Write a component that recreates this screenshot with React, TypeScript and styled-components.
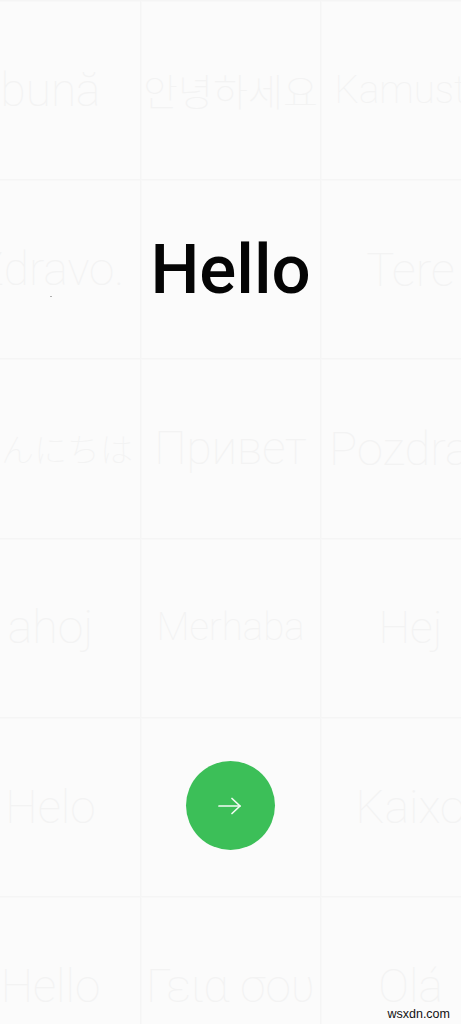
import React from "react";
import styled, { createGlobalStyle } from "styled-components";

const Global = createGlobalStyle`
  html, body { margin: 0; padding: 0; background: #fbfbfb; }
  body { width: 461px; height: 1024px; overflow: hidden; font-family: Roboto, "Noto Sans CJK JP", sans-serif; }
`;

const Screen = styled.main`
  position: relative;
  width: 461px;
  height: 1024px;
  overflow: hidden;
  background: #fbfbfb;
`;

const Grid = styled.div`
  width: 540px;
  margin-left: -39px;
  display: grid;
  grid-template-columns: repeat(3, 180px);
  grid-auto-rows: 179.2px;
`;

const Cell = styled.div`
  position: relative;
  display: flex;
  align-items: center;
  justify-content: center;
  box-sizing: border-box;
  border-top: 1px solid #f5f5f5;
  border-right: 1px solid #f5f5f5;
  box-shadow: 1px 0 0 #f8f8f8, inset 0 1px 0 #f8f8f8;
`;

const Greeting = styled.span<{ $size: number; $cjk?: boolean }>`
  font-family: ${(p) => (p.$cjk ? '"Noto Sans CJK KR", "Noto Sans CJK JP", sans-serif' : 'Roboto, sans-serif')};
  font-size: ${(p) => p.$size}px;
  font-weight: 100;
  color: #f3f3f3;
  white-space: nowrap;
  line-height: 1;
`;

const Title = styled.h1`
  margin: 0;
  font-family: Roboto, sans-serif;
  font-size: 69px;
  font-weight: 500;
  color: #050505;
  line-height: 1;
`;

const NextButton = styled.button`
  width: 89px;
  height: 89px;
  margin-bottom: 2px;
  padding: 0 3px 0 0;
  border: none;
  border-radius: 50%;
  background: #3cbf58;
  display: flex;
  align-items: center;
  justify-content: center;
`;

const Speck = styled.i`
  position: absolute;
  left: 89px;
  top: 116px;
  width: 2px;
  height: 1px;
  background: #b0b0b0;
`;

const Watermark = styled.span`
  position: absolute;
  right: 11px;
  bottom: 3px;
  font-family: "Liberation Sans", sans-serif;
  font-size: 12.5px;
  color: #111;
`;

const greetings: { text: string; size: number; cjk?: boolean }[] = [
  { text: "bună", size: 46 },
  { text: "안녕하세요", size: 38, cjk: true },
  { text: "Kamusta", size: 38.5 },
  { text: "Zdravo.", size: 46 },
  { text: "", size: 0 },
  { text: "Tere", size: 47 },
  { text: "こんにちは", size: 33, cjk: true },
  { text: "Привет", size: 46 },
  { text: "Pozdrav", size: 47 },
  { text: "ahoj", size: 46.5 },
  { text: "Merhaba", size: 38.5 },
  { text: "Hej", size: 45 },
  { text: "Helo", size: 46 },
  { text: "", size: 0 },
  { text: "Kaixo", size: 46 },
  { text: "Hello", size: 46 },
  { text: "Γεια σου", size: 46 },
  { text: "Olá", size: 46 },
];

export default function App() {
  return (
    <Screen>
      <Global />
      <Grid>
        {greetings.map((g, i) => (
          <Cell key={i}>
            {i === 4 && <Title>Hello</Title>}
            {i === 3 && <Speck />}
            {i === 13 && (
              <NextButton aria-label="Next">
                <svg width="23" height="18" viewBox="0 0 23 18" fill="none" stroke="#f2fbf4" strokeWidth="1.7" strokeLinecap="round" strokeLinejoin="round">
                  <path d="M1 9H22" />
                  <path d="M14 1.5L22 9L14 16.5" />
                </svg>
              </NextButton>
            )}
            {g.text && <Greeting $size={g.size} $cjk={g.cjk}>{g.text}</Greeting>}
          </Cell>
        ))}
      </Grid>
      <Watermark>wsxdn.com</Watermark>
    </Screen>
  );
}
